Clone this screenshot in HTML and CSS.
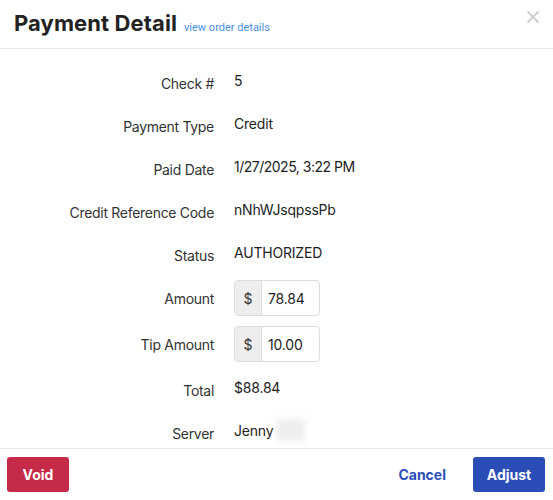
FILE: index.html
```html
<!DOCTYPE html>
<html>
<head>
<meta charset="utf-8">
<link rel="stylesheet" href="styles.css">
</head>
<body>
<div class="modal">
  <div class="modal-header">
    <h1 class="title">Payment Detail</h1>
    <a class="link" href="#">view order details</a>
    <button class="close" aria-label="Close">
      <svg width="14" height="14" viewBox="0 0 14 14"><path d="M1.5 1.5 L12.5 12.5 M12.5 1.5 L1.5 12.5" stroke="#cfcfcf" stroke-width="2" fill="none"/></svg>
    </button>
  </div>
  <div class="modal-body">
    <div class="row"><div class="label">Check #</div><div class="value">5</div></div>
    <div class="row"><div class="label">Payment Type</div><div class="value">Credit</div></div>
    <div class="row"><div class="label">Paid Date</div><div class="value date">1/27/2025, 3:22 PM</div></div>
    <div class="row"><div class="label">Credit Reference Code</div><div class="value">nNhWJsqpssPb</div></div>
    <div class="row"><div class="label">Status</div><div class="value">AUTHORIZED</div></div>
    <div class="row row-input"><div class="label">Amount</div>
      <div class="input-group"><span class="addon">$</span><span class="input">78.84</span></div></div>
    <div class="row row-input"><div class="label">Tip Amount</div>
      <div class="input-group"><span class="addon">$</span><span class="input">10.00</span></div></div>
    <div class="row"><div class="label">Total</div><div class="value">$88.84</div></div>
    <div class="row"><div class="label">Server</div><div class="value">Jenny <span class="blur"></span></div></div>
  </div>
  <div class="modal-footer">
    <button class="btn btn-void">Void</button>
    <div class="spacer"></div>
    <button class="btn btn-link">Cancel</button>
    <button class="btn btn-primary">Adjust</button>
  </div>
</div>
</body>
</html>
```

FILE: styles.css
```css
* { box-sizing: border-box; }
html, body { margin: 0; padding: 0; background: #fff; }
body { font-family: Inter, "Liberation Sans", sans-serif; color: #333; }
.modal { height: 500px; width: 553px; display: flex; flex-direction: column; }
.modal-header {
  height: 49px; border-bottom: 1px solid #e8e8e8;
  display: flex; align-items: baseline; padding: 8px 14px 0 14px; position: relative;
}
.title { margin: 0; font-size: 22px; font-weight: 700; color: #222; line-height: 30px; letter-spacing: 0.1px; }
.link { margin-left: 7px; font-family: Roboto, "Liberation Sans", sans-serif; font-size: 11px; color: #4a8fe0; text-decoration: none; }
.close { position: absolute; right: 13px; top: 10px; border: 0; background: none; padding: 0; width: 14px; height: 14px; }
.modal-body { flex: 1; overflow: hidden; padding-top: 16px; }
.row { display: grid; grid-template-columns: 214px 1fr; column-gap: 20px; align-items: center; height: 36px; margin-bottom: 7px; font-size: 14px; }
.row-input { margin-bottom: 10px; }
.label { text-align: right; color: #333; letter-spacing: -0.3px; }
.value { color: #222; padding-bottom: 6px; display: flex; align-items: center; letter-spacing: -0.2px; }
.date { letter-spacing: -0.5px; }
.blur { display: inline-block; width: 28px; height: 22px; background: #eeeeee; filter: blur(3px); margin-left: 4px; }
.input-group { display: flex; width: 86px; height: 36px; border: 1px solid #dcdcdc; border-radius: 4px; overflow: hidden; }
.addon { width: 27px; background: #eeeeee; border-right: 1px solid #dcdcdc; display: flex; align-items: center; justify-content: center; color: #333; }
.input { flex: 1; display: flex; align-items: center; padding-left: 6px; color: #222; letter-spacing: -0.2px; }
.modal-footer { height: 52px; border-top: 1px solid #e5e5ea; display: flex; align-items: flex-start; padding: 8px 8px 0 7px; }
.spacer { flex: 1; }
.btn { font-family: Inter, "Liberation Sans", sans-serif; font-size: 14px; font-weight: 700; height: 35px; border: 0; border-radius: 3px; cursor: pointer; }
.btn-void { width: 62px; background: #c52a48; color: #fff; }
.btn-link { background: none; color: #2b4fb8; padding: 0 12px; margin-right: 15px; }
.btn-primary { width: 72px; background: #2a4db8; color: #fff; }
```
